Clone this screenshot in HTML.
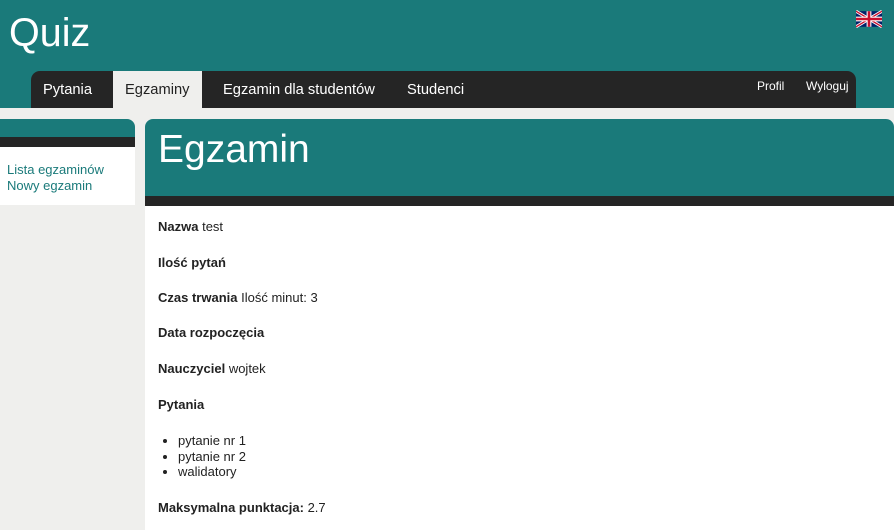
<!DOCTYPE html>
<html><head><meta charset="utf-8"><style>
body{margin:0;width:894px;height:530px;overflow:hidden;background:#efefed;font-family:"Liberation Sans",sans-serif;}
.hdr{position:absolute;left:0;top:0;width:894px;height:108px;background:#1a7a7a;}
.hdr h1{position:absolute;left:9px;top:11px;margin:0;font-weight:normal;font-size:39.5px;color:#fff;}
.nav{position:absolute;left:31px;top:71px;width:825px;height:37px;background:#252525;border-radius:9px 9px 0 0;}
.nav a{position:absolute;top:11px;color:#fff;font-size:14.7px;}
.nav .act{top:0;height:37px;background:#efefed;color:#222;padding:0 12px;line-height:39px;box-sizing:border-box;}
.nav .s{font-size:12px;top:8px;}
.flag{position:absolute;left:856px;top:10px;}
.side{position:absolute;left:0;top:119px;width:135px;}
.side .t{height:18px;background:#1a7a7a;border-radius:0 8px 0 0;}
.side .d{height:10px;background:#252525;}
.side .w{height:58px;background:#fff;font-size:13px;color:#1a7a7a;padding:15px 0 0 7px;box-sizing:border-box;line-height:16px;}
.main{position:absolute;left:145px;top:119px;width:749px;height:411px;background:#fff;border-radius:8px 8px 0 0;overflow:hidden;}
.main .t{height:77px;background:#1a7a7a;}
.main .t h2{margin:0;padding:9px 0 0 13px;font-weight:normal;font-size:39px;color:#fff;}
.main .d{height:10px;background:#252525;}
.c{padding:0 13px;font-size:13px;color:#222;position:relative;}
.c p{margin:0;line-height:16px;position:absolute;left:13px;}
.c ul{margin:0;padding-left:20px;line-height:15.5px;position:absolute;left:13px;top:227px;}
</style></head><body>
<div class="hdr"><h1>Quiz</h1>
<svg class="flag" width="26" height="18" viewBox="0 0 60 36"><rect width="60" height="36" fill="#012169"/><path d="M0 0L60 36M60 0L0 36" stroke="#fff" stroke-width="7"/><path d="M0 0L60 36M60 0L0 36" stroke="#c8102e" stroke-width="3"/><path d="M30 0V36M0 18H60" stroke="#fff" stroke-width="11"/><path d="M30 0V36M0 18H60" stroke="#c8102e" stroke-width="6"/></svg>
<div class="nav">
<a style="left:12px">Pytania</a>
<a class="act" style="left:82px">Egzaminy</a>
<a style="left:192px">Egzamin dla studentów</a>
<a style="left:376px">Studenci</a>
<a class="s" style="left:726px">Profil</a>
<a class="s" style="left:775px">Wyloguj</a>
</div></div>
<div class="side"><div class="t"></div><div class="d"></div><div class="w">Lista egzaminów<br>Nowy egzamin</div></div>
<div class="main"><div class="t"><h2>Egzamin</h2></div><div class="d"></div>
<div class="c">
<p style="top:13px"><b>Nazwa</b> test</p>
<p style="top:49px"><b>Ilość pytań</b></p>
<p style="top:84px"><b>Czas trwania</b> Ilość minut: 3</p>
<p style="top:119px"><b>Data rozpoczęcia</b></p>
<p style="top:155px"><b>Nauczyciel</b> wojtek</p>
<p style="top:191px"><b>Pytania</b></p>
<ul><li>pytanie nr 1</li><li>pytanie nr 2</li><li>walidatory</li></ul>
<p style="top:294px"><b>Maksymalna punktacja:</b> 2.7</p>
</div></div>
</body></html>
